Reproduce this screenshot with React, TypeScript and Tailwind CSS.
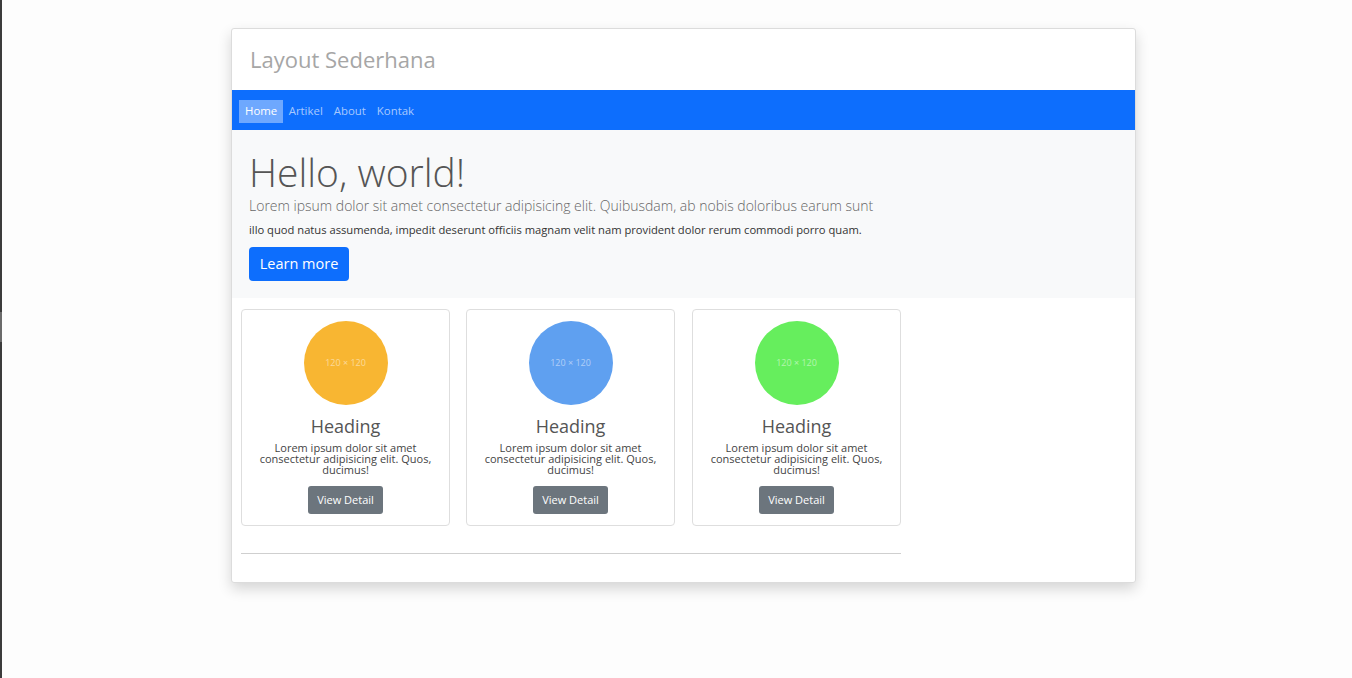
import React from "react";

const cards = [
  { color: "bg-[#f8b632]", ml: "" },
  { color: "bg-[#5fa0f0]", ml: "ml-[16px]" },
  { color: "bg-[#66ee5d]", ml: "ml-[17px]" },
];

const links = ["Home", "Artikel", "About", "Kontak"];

function Card({ color, ml }: { color: string; ml: string }) {
  return (
    <div
      className={`${ml} w-[209px] border border-[#dedede] rounded-[4px] bg-white flex flex-col items-center pt-[11px] pb-[11px] px-[14px]`}
    >
      <div
        className={`w-[84px] h-[84px] rounded-full ${color} flex items-center justify-center text-[9px] text-white/50`}
      >
        120 × 120
      </div>
      <h3 className="text-[18px] leading-[24px] text-[#555] mt-[9px]">Heading</h3>
      <p className="text-[11px] leading-[11px] text-[#444] text-center mt-[4px]">
        Lorem ipsum dolor sit amet consectetur adipisicing elit. Quos, ducimus!
      </p>
      <button className="mt-[11px] h-[28px] px-[9px] bg-[#6c757d] text-white text-[11px] rounded-[3px]">
        View Detail
      </button>
    </div>
  );
}

export default function App() {
  return (
    <div
      className="flex min-h-[678px] bg-[#fdfdfd]"
      style={{ fontFamily: '"Open Sans", "Liberation Sans", sans-serif' }}
    >
      {/* left edge strip */}
      <div className="w-[2px] bg-[#3c3c3c] flex flex-col">
        <div className="h-[312px]" />
        <div className="h-[30px] bg-[#6b6b6b]" />
      </div>

      <div className="ml-[229px] mt-[28px] w-[905px] h-[555px] bg-white border border-[#dcdcdc] rounded-[3px] shadow-[0_6px_14px_rgba(0,0,0,0.16)] flex flex-col">
        <header className="h-[61px] flex items-center px-[18px]">
          <h1 className="text-[22px] text-[#a6a6a6]">Layout Sederhana</h1>
        </header>

        <nav className="h-[40px] bg-[#0d6efd] flex items-center px-[7px] pt-[2px]">
          {links.map((l, i) => (
            <a
              key={l}
              className={
                i === 0
                  ? "h-[23px] px-[6px] flex items-center text-[11.4px] text-white bg-[#6ea8fe]"
                  : "h-[23px] px-[5.5px] flex items-center text-[11.4px] text-[#a8c9fe]"
              }
            >
              {l}
            </a>
          ))}
        </nav>

        <section className="bg-[#f8f9fa] h-[168px] px-[17px] pt-[18px]">
          <h2 className="text-[39px] leading-[48px] font-light text-[#555]">Hello, world!</h2>
          <p className="text-[14px] leading-[22px] font-light text-[#666] mt-[-1px]">
            Lorem ipsum dolor sit amet consectetur adipisicing elit. Quibusdam, ab nobis doloribus earum sunt
          </p>
          <p className="text-[11.2px] leading-[14px] text-[#333] mt-[6px]">
            illo quod natus assumenda, impedit deserunt officiis magnam velit nam provident dolor rerum commodi porro quam.
          </p>
          <button className="mt-[10px] h-[34px] w-[100px] bg-[#0d6efd] text-white text-[14.5px] rounded-[4px]">
            Learn more
          </button>
        </section>

        <div className="px-[9px] pt-[11px]">
          <div className="w-[660px] flex">
            {cards.map((c, i) => (
              <Card key={i} color={c.color} ml={c.ml} />
            ))}
          </div>
          <hr className="w-[660px] mt-[27px] border-0 border-t border-[#cfcfcf]" />
        </div>
      </div>
    </div>
  );
}
